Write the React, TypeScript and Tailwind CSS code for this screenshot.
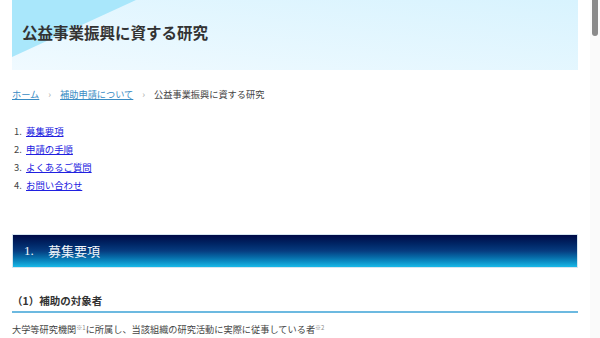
/**
 * 公益事業振興に資する研究 — research grant page header + first section.
 */
import React from 'react';

const jp = { fontFamily: '"Noto Sans CJK JP", "Noto Sans", sans-serif' };

const toc = ['募集要項', '申請の手順', 'よくあるご質問', 'お問い合わせ'];

function Breadcrumb() {
  return (
    <nav className="mt-[17px] flex items-center text-[9.2px] leading-[14px] text-[#444]">
      <a href="#" className="text-[#3a8cc4] underline">ホーム</a>
      <span className="mx-[9px] text-[#aaa]">›</span>
      <a href="#" className="text-[#3a8cc4] underline">補助申請について</a>
      <span className="mx-[9px] text-[#aaa]">›</span>
      <span>公益事業振興に資する研究</span>
    </nav>
  );
}

export default function App() {
  return (
    <div className="flex h-[338px] w-[600px] overflow-hidden bg-white" style={jp}>
      <div className="flex w-[590px] flex-col px-3">
        {/* Banner */}
        <header className="relative flex h-[70px] items-center overflow-hidden bg-linear-to-tr from-[#f0faff] to-[#d8f3fe] pb-1 pl-[10px]">
          <svg className="absolute left-0 top-0" width="130" height="60" viewBox="0 0 130 60">
            <polygon points="0,0 124,0 0,57" fill="#a9e7fb" />
          </svg>
          <h1 className="relative text-[15.5px] font-bold text-[#333]">公益事業振興に資する研究</h1>
        </header>

        <Breadcrumb />

        {/* Table of contents */}
        <ol className="mt-[21px] pl-[2px] text-[9.4px] leading-[18px] text-[#444]">
          {toc.map((item, i) => (
            <li key={item} className="flex">
              <span className="w-[12px]">{i + 1}.</span>
              <a href="#" className="text-[#2020e0] underline">{item}</a>
            </li>
          ))}
        </ol>

        {/* Section 1 */}
        <h2 className="mt-[40px] flex h-[34px] items-center border border-[#d6e6f0] bg-linear-to-b from-[#000946] via-[#073c80] to-[#19b9e8] pl-[11px] text-[13px] text-[#f2f6fa]">
          <span className="w-[24px]" style={{ fontFamily: '"Liberation Serif", serif' }}>1.</span>
          <span>募集要項</span>
        </h2>

        <h3 className="mt-[25px] border-b-2 border-[#6cb9e0] pb-[2px] text-[10.5px] font-bold leading-[16px] text-[#333]">
          （1）補助の対象者
        </h3>

        <p className="mt-[9px] text-[9.2px] leading-[14px] text-[#444]">
          大学等研究機関<sup className="text-[6px] text-[#888]">※1</sup>に所属し、当該組織の研究活動に実際に従事している者<sup className="text-[6px] text-[#888]">※2</sup>
        </p>
      </div>

      {/* Scrollbar */}
      <div className="flex w-[10px] justify-center bg-[#fafafa]">
        <div className="h-[36px] w-[6px] rounded-b-[3px] bg-[#8a8a8a]" />
      </div>
    </div>
  );
}
